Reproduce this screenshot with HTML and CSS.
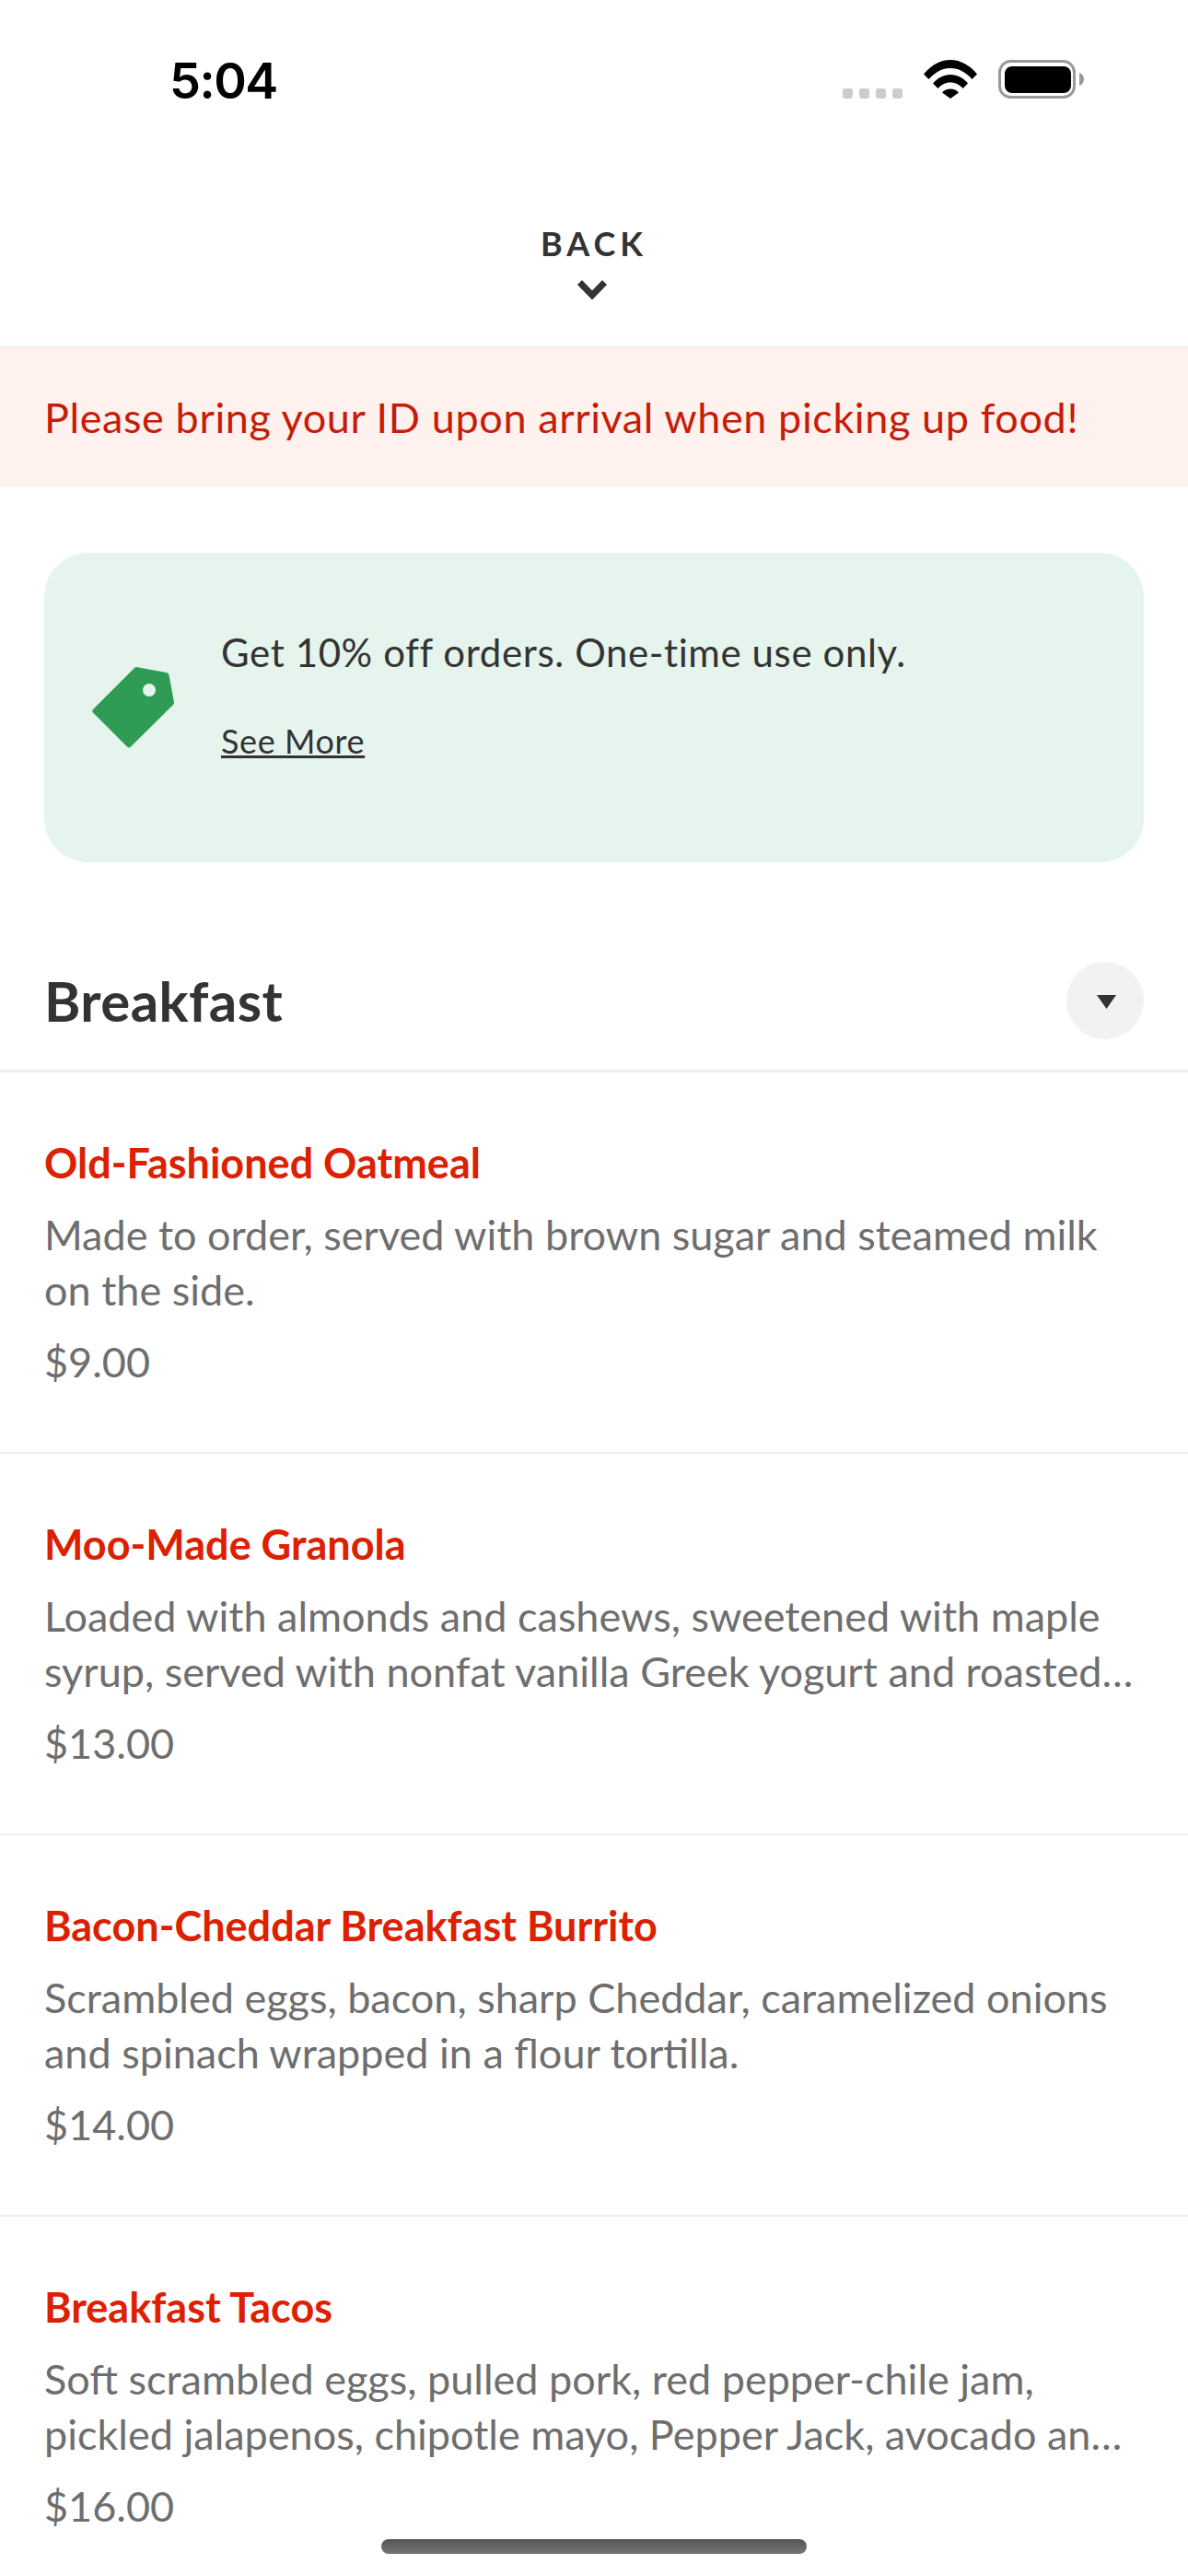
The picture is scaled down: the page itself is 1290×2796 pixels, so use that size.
FILE: index.html
```html
<!DOCTYPE html>
<html lang="en">
<head>
<meta charset="utf-8">
<title>Menu</title>
<link rel="stylesheet" href="styles.css">
</head>
<body>
<div class="screen">
  <div class="status">
    <span class="time">5:04</span>
    <div class="status-icons">
      <div class="signal"><i></i><i></i><i></i><i></i></div>
      <svg class="wifi" width="58" height="42" viewBox="0 0 58 42"><path d="M0 15.500C7.500 6 18 0 29 0s21.500 6 29 15.500l-5.500 5.500C46 13.500 38 9 29 9S12 13.500 5.500 21z M10 25.500C15 19.500 21.500 16 29 16s14 3.500 19 9.500l-5.500 5.500C39 27 34.500 24.500 29 24.500S19 27 15.500 31z M20 35.500C22 33 25.500 31.500 29 31.500s7 1.500 9 4L29 42z"/></svg>
      <svg class="battery" width="94" height="42" viewBox="0 0 94 42"><rect x="1.500" y="1.500" width="81" height="39" rx="12" fill="none" stroke="#999" stroke-width="3"/><rect x="7" y="7" width="72" height="29" rx="8"/><path d="M88 14c3 1 5 3.500 5 7s-2 6-5 7z" fill="#999"/></svg>
    </div>
  </div>
  <header class="back">
    <span class="back-label">BACK</span>
    <svg class="back-chevron" width="34" height="23" viewBox="0 0 34 23"><path d="M3.500 3.500L17 17.500L30.500 3.500" fill="none" stroke="#333" stroke-width="7"/></svg>
  </header>
  <div class="alert">Please bring your ID upon arrival when picking up food!</div>
  <section class="promo">
    <svg class="tag" width="90" height="90" viewBox="0 0 90 90"><path fill-rule="evenodd" fill="#2f9c55" d="M48 1L81 7Q83 7.500 83.500 9.500L89 39Q89 41 88 42L42 87.500Q40 89.500 38 87.500L1 50.500Q-.5 48.500 1 47L46 2Q47 1 48 1ZM55 26a7 7 0 1 0 14 0a7 7 0 1 0-14 0Z"/></svg>
    <div class="promo-text">
      <p class="promo-title">Get 10% off orders. One-time use only.</p>
      <a class="promo-link">See More</a>
    </div>
  </section>
  <div class="section-head">
    <h2>Breakfast</h2>
    <div class="toggle"><svg class="toggle-arrow" width="21" height="15" viewBox="0 0 21 15"><path d="M0 0h21L10.500 15z" fill="#333"/></svg></div>
  </div>
  <article class="item">
    <h3>Old-Fashioned Oatmeal</h3>
    <p class="desc">Made to order, served with brown sugar and steamed milk on the side.</p>
    <p class="price">$9.00</p>
  </article>
  <article class="item">
    <h3>Moo-Made Granola</h3>
    <p class="desc">Loaded with almonds and cashews, sweetened with maple syrup, served with nonfat vanilla Greek yogurt and roasted…</p>
    <p class="price">$13.00</p>
  </article>
  <article class="item">
    <h3>Bacon-Cheddar Breakfast Burrito</h3>
    <p class="desc">Scrambled eggs, bacon, sharp Cheddar, caramelized onions and spinach wrapped in a flour tortilla.</p>
    <p class="price">$14.00</p>
  </article>
  <article class="item">
    <h3>Breakfast Tacos</h3>
    <p class="desc">Soft scrambled eggs, pulled pork, red pepper-chile jam, pickled jalapenos, chipotle mayo, Pepper Jack, avocado an…</p>
    <p class="price">$16.00</p>
  </article>
  <div class="home-bar"></div>
</div>
</body>
</html>
```
FILE: styles.css
```css
* { box-sizing: border-box; }
html, body { margin: 0; padding: 0; background: #fff; }
.screen {
  position: relative;
  width: 1290px;
  height: 2796px;
  overflow: hidden;
  font-family: Lato, sans-serif;
  color: #333;
}
.status {
  height: 168px;
  display: flex;
  justify-content: space-between;
  padding: 58px 112px 0 184px;
}
.time {
  font-family: Inter, sans-serif;
  font-weight: 600;
  font-size: 54px;
  line-height: 60px;
  letter-spacing: -1.5px;
  color: #000;
}
.status-icons { display: flex; align-items: flex-start; padding-top: 7px; }
.signal { display: flex; gap: 7px; margin-top: 31px; margin-right: 23px; }
.signal i { width: 11px; height: 11px; border-radius: 3px; background: #ccc; }
.wifi { margin-right: 23px; }
.back {
  height: 210px;
  display: flex;
  flex-direction: column;
  align-items: center;
  border-bottom: 2px solid #eee;
  padding-top: 74px;
}
.back-label {
  font-weight: 700;
  font-size: 36px;
  line-height: 44px;
  letter-spacing: 5px;
}
.back-chevron { margin: 17px 4px 0 0; }
.alert {
  height: 150px;
  background: #fff1ed;
  color: #c61c08;
  font-size: 45px;
  line-height: 150px;
  padding-left: 48px;
  letter-spacing: .6px;
}
.promo {
  margin: 72px 48px 0;
  height: 336px;
  border-radius: 48px;
  background: #e5f4ed;
  display: flex;
  align-items: center;
  padding-left: 52px;
}
.tag { flex: none; margin-right: 50px; }
.promo-text { margin-top: -30px; }
.promo-title { margin: 0 0 46px; font-size: 42px; line-height: 56px; letter-spacing: .6px; }
.promo-link { font-size: 36px; line-height: 44px; letter-spacing: .6px; text-decoration: underline; display: block; }
.section-head {
  margin-top: 60px;
  height: 168px;
  padding: 14px 48px 0;
  display: flex;
  align-items: center;
  justify-content: space-between;
  border-bottom: 3px solid #eee;
}
.section-head h2 { margin: 0; font-size: 60px; line-height: 72px; font-weight: 700; letter-spacing: .4px; }
.toggle {
  width: 84px;
  height: 84px;
  border-radius: 50%;
  background: #f2f2f2;
  display: flex;
  align-items: center;
  justify-content: center;
}
.toggle-arrow { margin: 3px 0 0 3px; }
.item {
  height: 414px;
  padding: 68px 48px 0;
  border-bottom: 2px solid #eee;
}
.item h3 { margin: 0 0 18px; color: #dc2000; font-size: 45px; line-height: 60px; font-weight: 700; }
.desc { margin: 0; color: #6e6e6e; font-size: 45px; line-height: 60px; }
.price { margin: 18px 0 0; color: #6e6e6e; font-size: 45px; line-height: 60px; }
.home-bar {
  position: absolute;
  left: 414px;
  bottom: 24px;
  width: 462px;
  height: 16px;
  border-radius: 8px;
  background: linear-gradient(#555, #777);
}
```
